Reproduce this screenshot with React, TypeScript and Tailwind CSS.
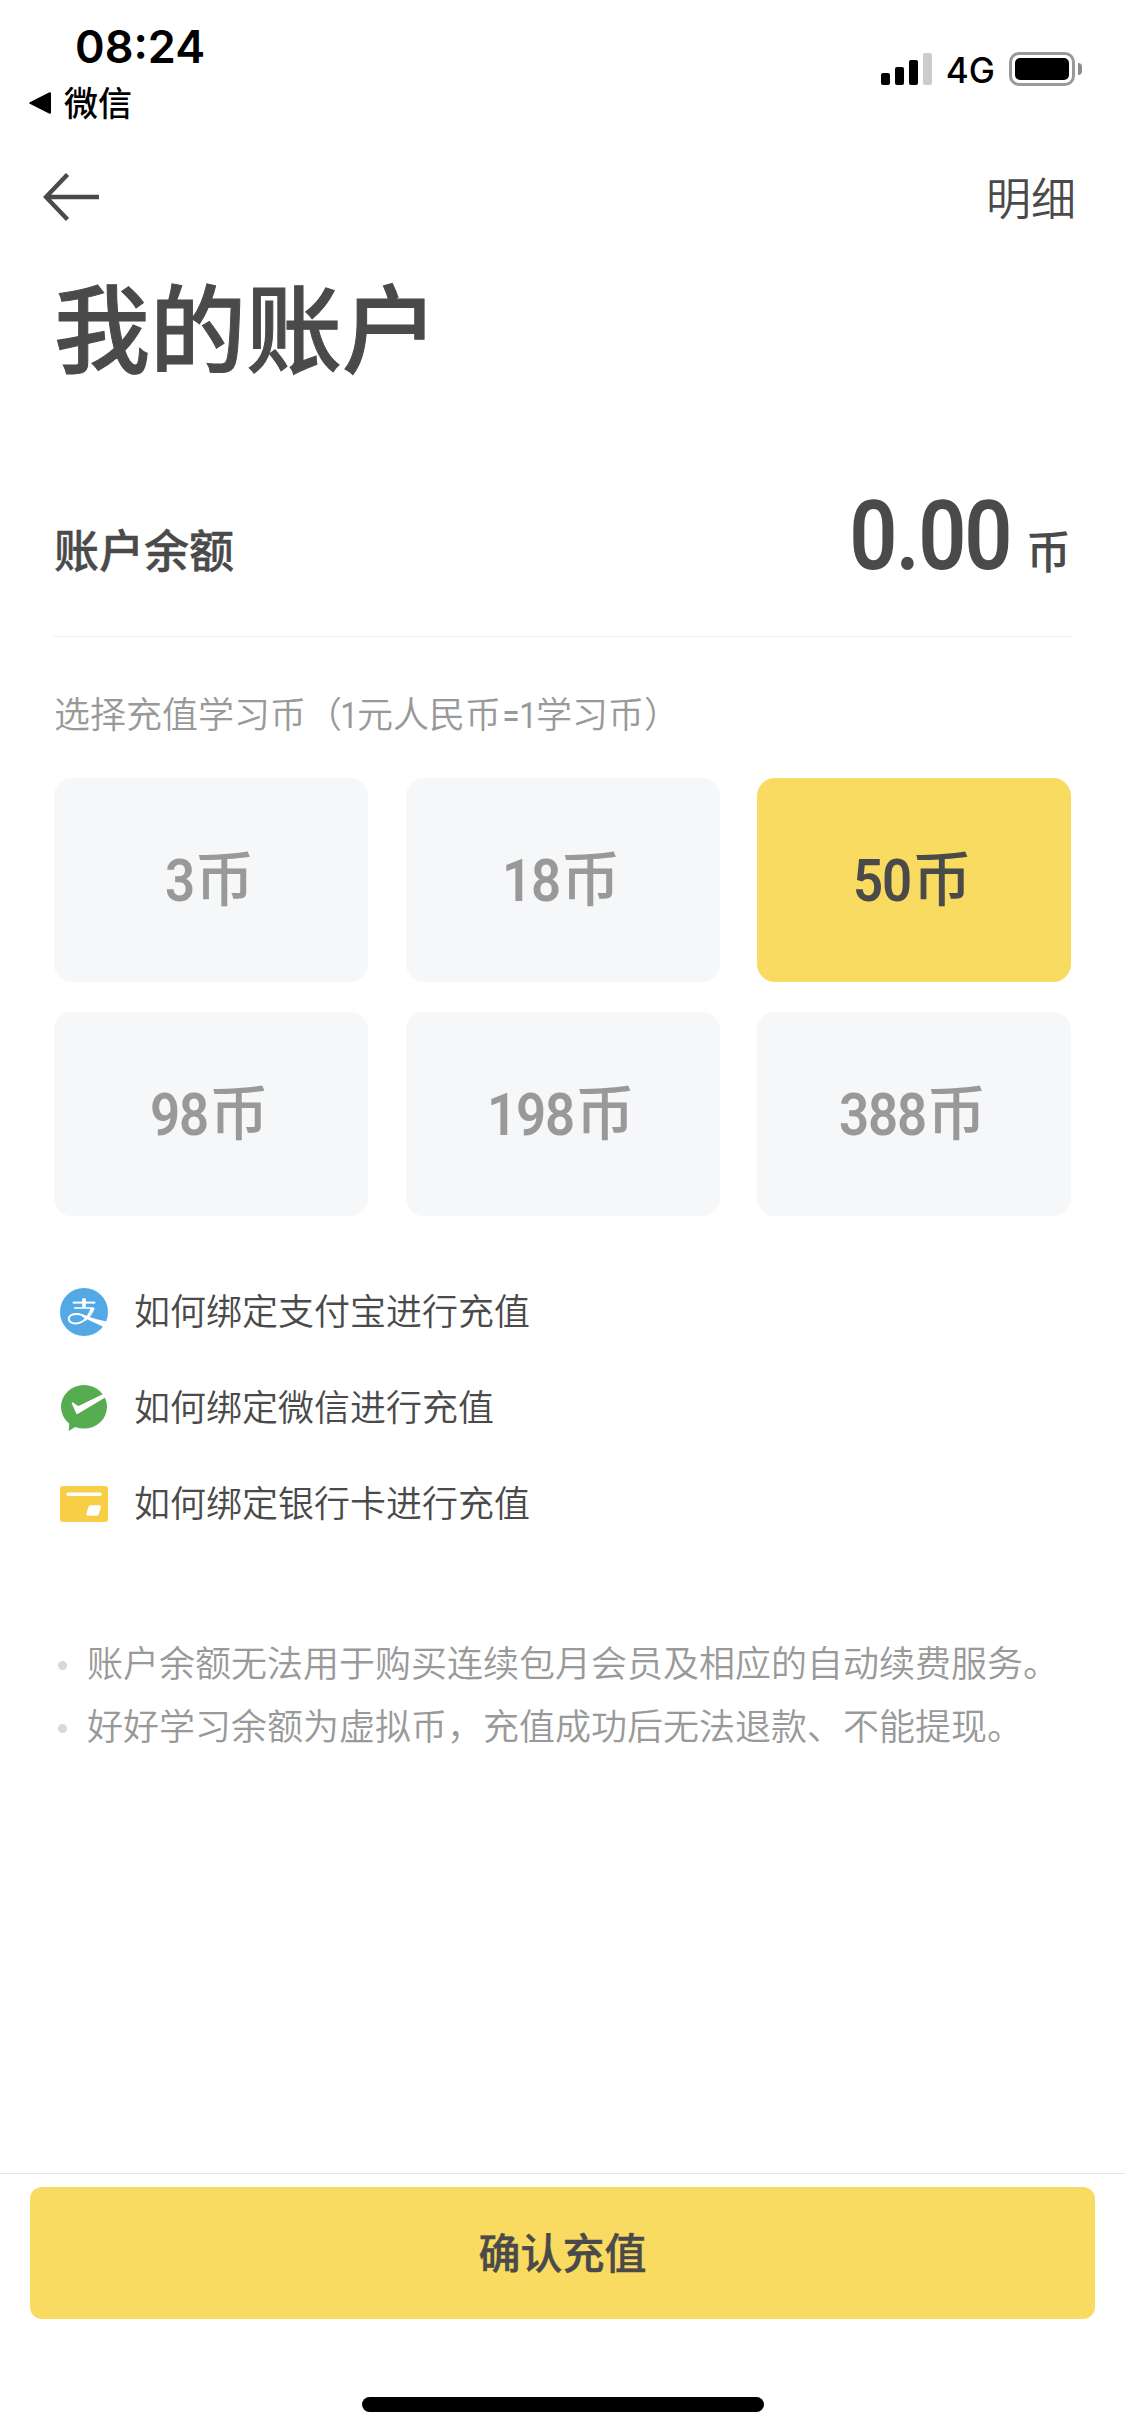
import React from "react";

const packs = [3, 18, 50, 98, 198, 388];
const SELECTED = 50;

const notes = [
  "账户余额无法用于购买连续包月会员及相应的自动续费服务。",
  "好好学习余额为虚拟币，充值成功后无法退款、不能提现。",
];

function AlipayIcon() {
  return (
    <svg viewBox="0 0 48 48" className="size-12">
      <circle cx="24" cy="24" r="24" fill="#52A9E6" />
      <g fill="none" stroke="#fff" strokeLinecap="butt">
        <path d="M12.7 14.6H35.3" strokeWidth="2" />
        <path d="M14 20H33.5" strokeWidth="1.6" />
        <path d="M24 10.3V20" strokeWidth="3.6" />
        <path
          d="M32 20.2C30 27 24 35.4 15.8 35.5C10.8 35.6 8.7 33 8.7 30.6C8.7 27.4 12.5 25.8 17 26C21.5 26.2 25 28 30 30.6"
          strokeWidth="2"
        />
      </g>
      <path d="M30.6 20H34.8C33 25.2 29.8 29.8 25.6 33L23.4 31.4C27 28.6 29.4 24.6 30.6 20Z" fill="#fff" />
      <path d="M22 26.6C30 29.4 37 31.6 47 33.6L43.6 39C37 36 29 32 22 28.8Z" fill="#fff" />
    </svg>
  );
}

function WechatPayIcon() {
  return (
    <svg viewBox="0 0 48 48" className="size-12">
      <ellipse cx="24" cy="22.8" rx="23" ry="21.8" fill="#57AB51" />
      <path d="M9.5 37L8.7 47L16 42.5Z" fill="#57AB51" />
      <path
        d="M11.7 19.2Q11.7 17.6 13 18.4L17.2 21.4Q18.2 22 19.6 21.5L43.2 10L46 13L18 29.8Q16.8 30.6 16.2 29.4Z"
        fill="#fff"
      />
    </svg>
  );
}

function BankCardIcon() {
  return (
    <svg viewBox="0 0 48 48" className="size-12">
      <rect y="6" width="48" height="36" rx="3" fill="#F7CE46" />
      <rect x="6.3" y="12.6" width="35.5" height="3.4" rx="1.7" fill="#fff" />
      <path
        d="M30.6 25.3H39.4Q41.4 25.3 40.9 27.2L38.9 34Q38.4 35.7 36.8 35.7H27.8Q25.8 35.7 26.3 33.8L28.4 26.9Q28.9 25.3 30.6 25.3Z"
        fill="#fff"
      />
    </svg>
  );
}

const guides = [
  { Icon: AlipayIcon, label: "如何绑定支付宝进行充值" },
  { Icon: WechatPayIcon, label: "如何绑定微信进行充值" },
  { Icon: BankCardIcon, label: "如何绑定银行卡进行充值" },
];

/* Digits in a narrow face: each glyph sits centred in a narrow cell. */
function Digits({ value, cell, dot = "" }: { value: string; cell: string; dot?: string }) {
  return (
    <span className="flex font-['Roboto']">
      {value.split("").map((c, i) => (
        <span key={i} className={`flex justify-center ${c === "." ? dot : cell}`}>
          <span className="scale-x-[0.88]">{c}</span>
        </span>
      ))}
    </span>
  );
}

export default function App() {
  return (
    <div className="flex h-[2436px] w-[1125px] flex-col overflow-hidden bg-white font-['Noto_Sans_CJK_SC',sans-serif] text-[#4a4a4a]">
      <div className="flex h-[132px] justify-between text-black">
        <div className="pt-[23px] pl-[29px]">
          <div className="pl-[46px] font-['Inter'] text-[45px] leading-[48px] font-semibold">08:24</div>
          <div className="mt-[6px] flex h-[50px] items-center gap-[13px]">
            <svg viewBox="0 0 22 22" className="mt-[2px] size-[22px]">
              <path d="M0.8 11.8Q-0.4 11 0.8 10.2L20 0.4Q22 -0.4 22 1.6V20.4Q22 22.4 20 21.6Z" />
            </svg>
            <span className="text-[34px] leading-[50px] font-medium">微信</span>
          </div>
        </div>
        <div className="mt-[52px] flex h-[34px] items-center pr-[43px]">
          <div className="flex items-end gap-[5px]">
            <i className="h-3 w-[9px] rounded-[2px] bg-black" />
            <i className="h-[18px] w-[9px] rounded-[2px] bg-black" />
            <i className="h-[25px] w-[9px] rounded-[2px] bg-black" />
            <i className="h-8 w-[9px] rounded-[2px] bg-[#ccc]" />
          </div>
          <span className="mr-[14px] ml-[14px] pt-[2px] font-['Inter'] text-[35px] leading-[34px] font-medium">4G</span>
          <div className="h-[34px] w-[66px] rounded-[10px] border-[3px] border-[#999] p-[3px]">
            <div className="h-full rounded-[5px] bg-black" />
          </div>
          <i className="ml-[3px] h-3 w-1 rounded-r-full bg-[#8c8c8c]" />
        </div>
      </div>

      <div className="flex h-[130px] items-center justify-between pr-[49px] pl-[43px]">
        <svg viewBox="0 0 56 48" className="h-12 w-14" fill="none" stroke="#4a4a4a" strokeWidth="4.4">
          <path d="M56 24H3M24.5 1.5L3 24L24.5 46.5" />
        </svg>
        <span className="pb-px text-[45px] leading-none font-[350]">明细</span>
      </div>

      <h1 className="mt-[10px] pl-[54px] text-[96px] leading-[104px] font-medium [-webkit-text-stroke:1px_#4a4a4a]">
        我的账户
      </h1>

      <div className="mx-[54px] flex h-[261px] items-end justify-between border-b border-[#eee] pb-[50px]">
        <span className="mb-[4px] text-[45px] leading-[66px] font-medium [-webkit-text-stroke:0.4px_#4a4a4a]">
          账户余额
        </span>
        <div className="flex items-baseline text-[96px] leading-[100px] font-medium">
          <span className="flex font-semibold">
            <Digits value="0.00" cell="w-[46px]" dot="w-[23px]" />
          </span>
          <span className="ml-[15px] text-[45px] leading-[66px]">币</span>
        </div>
      </div>

      <div className="mt-[48px] ml-[54px] flex h-[54px] items-baseline text-[36px] leading-[54px] font-[350] text-[#999]">
        选择充值学习币（
        <span className="flex font-normal">
          <Digits value="1" cell="w-[15px]" />
        </span>
        元人民币
        <span className="flex font-normal">
          <Digits value="=" cell="w-[20px]" />
          <Digits value="1" cell="w-[15px]" />
        </span>
        学习币）
      </div>

      <div className="mx-[54px] mt-[39px] grid grid-cols-3 gap-x-[37.5px] gap-y-[30px]">
        {packs.map((n) => (
          <button
            key={n}
            className={`flex h-[204px] items-center justify-center rounded-[18px] pr-[2px] pb-[4px] font-medium ${
              n === SELECTED ? "bg-[#F9DB61] text-[#4a4a4a]" : "bg-[#F6F7F9] text-[#999]"
            }`}
          >
            <span className="flex items-baseline text-[60px] leading-[88px]">
              <span className="flex font-semibold">
                <Digits value={String(n)} cell="w-[29px]" />
              </span>
              币
            </span>
          </button>
        ))}
      </div>

      <ul className="mt-[48px] ml-[60px]">
        {guides.map(({ Icon, label }) => (
          <li key={label} className="flex h-24 items-center gap-[26px]">
            <Icon />
            <span className="pb-[6px] text-[36px] leading-[54px] font-[350]">{label}</span>
          </li>
        ))}
      </ul>

      <ul className="mt-[78px] ml-[58px] text-[36px] leading-[63px] font-[350] text-[#999]">
        {notes.map((t) => (
          <li key={t} className="flex items-center gap-5">
            <i className="mt-2 size-[9px] rounded-full bg-[#d8d8d8]" />
            {t}
          </li>
        ))}
      </ul>

      <div className="mt-auto flex h-[263px] flex-col items-center border-t border-[#e5e5e5] px-[30px] pt-[13px]">
        <button className="h-[132px] w-full rounded-[12px] bg-[#F9DB61] pb-[6px] text-[42px] font-medium [-webkit-text-stroke:0.4px_#4a4a4a]">
          确认充值
        </button>
        <div className="mt-[78px] h-[15px] w-[402px] rounded-full bg-black" />
      </div>
    </div>
  );
}
